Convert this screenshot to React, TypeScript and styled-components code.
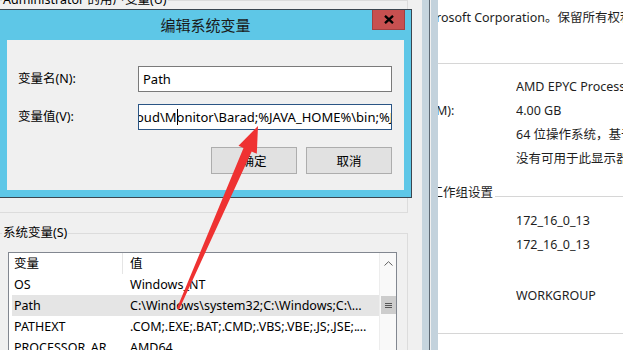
import React from "react";
import styled, { createGlobalStyle } from "styled-components";

const GlobalStyle = createGlobalStyle`
  html, body {
    margin: 0;
    padding: 0;
  }
  body {
    width: 623px;
    height: 350px;
    overflow: hidden;
    background: #f0f0f0;
    font-family: "Noto Sans", "Noto Sans CJK SC", sans-serif;
    font-size: 12.5px;
    color: #000;
  }
`;

const Desktop = styled.div`
  position: relative;
  width: 623px;
  height: 350px;
  overflow: hidden;
  background: #f0f0f0;
`;

/* ---------- 系统 (control panel) window, furthest back ---------- */

const SystemWindow = styled.div`
  position: absolute;
  left: 300px;
  top: 0;
  width: 420px;
  height: 350px;
  box-sizing: border-box;
  padding: 6px 0 0 43px;
  background: #fff;
  color: #1e1e1e;
  white-space: nowrap;
`;

const Copyright = styled.div`
  padding-left: 27px;
  line-height: 24px;
`;

const Rule = styled.div<{ $top: number }>`
  height: 1px;
  margin-top: ${(p) => p.$top}px;
  background: #d6d6d6;
`;

const InfoGrid = styled.div<{ $top: number }>`
  display: grid;
  grid-template-columns: 162px 1fr;
  padding-left: 11px;
  margin-top: ${(p) => p.$top}px;
`;

const InfoCell = styled.div<{ $tall?: boolean }>`
  line-height: ${(p) => (p.$tall ? 27 : 24)}px;
  overflow: hidden;
`;

const SectionHead = styled.div`
  display: flex;
  align-items: center;
  margin-top: 10px;
  line-height: 24px;
`;

const SectionLine = styled.div`
  flex: 1;
  height: 1px;
  margin: 6px 0 0 2px;
  background: #d6d6d6;
`;

/* ---------- 系统属性 dialog, only its frame shows ---------- */

const PropsDialog = styled.div`
  position: absolute;
  left: 200px;
  top: 0;
  width: 238px;
  height: 350px;
  box-sizing: border-box;
  background: #f0f0f0;
  border-right: 7px solid #c3d2dc;
`;

/* ---------- 环境变量 dialog ---------- */

const EnvDialog = styled.div`
  position: absolute;
  left: -16px;
  top: 0;
  width: 446px;
  height: 360px;
  box-sizing: border-box;
  padding-left: 10px;
  background: #f0f0f0;
  border-right: 1px solid #5d6973;
  box-shadow: inset -7px 0 0 #c6d5de;
`;

const Group = styled.fieldset<{ $height?: number; $top: number }>`
  display: block;
  width: 414px;
  box-sizing: border-box;
  margin: ${(p) => p.$top}px 0 0 0;
  padding: 11px 10px 0 13px;
  border: 1px solid #dcdcdc;
  ${(p) => (p.$height ? `height: ${p.$height}px;` : "")}
`;

const GroupLegend = styled.legend`
  margin-left: -6px;
  padding: 0 1px;
  line-height: 16px;
  white-space: nowrap;
`;

const ListView = styled.div`
  display: flex;
  height: 130px;
  border: 1px solid #828790;
  background: #fff;
`;

const ListMain = styled.div`
  flex: 1;
  min-width: 0;
`;

const ListHeader = styled.div`
  display: grid;
  grid-template-columns: 114px 1fr;
  height: 21px;
`;

const HeaderCell = styled.div<{ $first?: boolean }>`
  padding-left: ${(p) => (p.$first ? 5 : 7)}px;
  line-height: 21px;
  border-right: ${(p) => (p.$first ? "1px solid #e5e5e5" : "none")};
`;

const ListBody = styled.div`
  padding-left: 3px;
`;

const ListRow = styled.div<{ $selected?: boolean }>`
  display: grid;
  grid-template-columns: 111px 1fr;
  height: 21px;
  line-height: 21px;
  background: ${(p) => (p.$selected ? "#e5e5e5" : "transparent")};
`;

const Cell = styled.div<{ $first?: boolean }>`
  padding: 0 ${(p) => (p.$first ? 3 : 7)}px 0 ${(p) => (p.$first ? 2 : 7)}px;
  overflow: hidden;
  white-space: nowrap;
  text-overflow: ellipsis;
`;

const ScrollBar = styled.div`
  width: 17px;
  display: flex;
  flex-direction: column;
  align-items: center;
  background: #f9f9f9;
  border-left: 1px solid #ededed;
  box-sizing: border-box;
`;

const ScrollArrow = styled.div`
  height: 21px;
  display: flex;
  align-items: center;
  justify-content: center;
`;

const ScrollThumb = styled.div<{ $offset: number }>`
  width: 15px;
  height: 18px;
  margin-top: ${(p) => p.$offset}px;
  display: flex;
  align-items: center;
  justify-content: center;
  background: #cdcdcd;
`;

/* ---------- 编辑系统变量 dialog ---------- */

const EditDialog = styled.div`
  position: absolute;
  left: -1px;
  top: 9px;
  width: 413px;
  box-sizing: border-box;
  padding: 0 7px 7px;
  background: #5ec7e7;
  border: 1px solid #3b4650;
`;

const TitleBar = styled.div`
  display: grid;
  grid-template-columns: 1fr auto 1fr;
  height: 30px;
`;

const Title = styled.div`
  grid-column: 2;
  font-size: 15px;
  line-height: 30px;
  color: #1a1a1a;
`;

const CloseButton = styled.div`
  grid-column: 3;
  justify-self: end;
  width: 33px;
  height: 20px;
  margin-right: -1px;
  display: flex;
  align-items: center;
  justify-content: center;
  box-sizing: border-box;
  background: #c75050;
  border: 1px solid #a24040;
  border-top: none;
`;

const Client = styled.div`
  height: 150px;
  box-sizing: border-box;
  padding: 26px 12px 0 11px;
  background: #f0f0f0;
`;

const FormGrid = styled.div`
  display: grid;
  grid-template-columns: 120px 1fr;
  row-gap: 12px;
  align-items: center;
`;

const FieldLabel = styled.div`
  line-height: 26px;
`;

const TextBox = styled.div<{ $focused?: boolean }>`
  height: 26px;
  box-sizing: border-box;
  padding-left: ${(p) => (p.$focused ? 0 : 4)}px;
  border: 1px solid ${(p) => (p.$focused ? "#2a5585" : "#7a7a7a")};
  background: #fff;
  font-size: 13px;
  line-height: 24px;
  white-space: nowrap;
  overflow: hidden;
`;

const ScrolledText = styled.span<{ $shift: number }>`
  display: inline-block;
  margin-left: ${(p) => -p.$shift}px;
`;

const Caret = styled.span`
  display: inline-block;
  width: 1px;
  height: 16px;
  margin-right: -1px;
  vertical-align: -3px;
  background: #000;
`;

const ButtonRow = styled.div`
  display: flex;
  justify-content: flex-end;
  gap: 9px;
  margin-top: 17px;
`;

const DialogButton = styled.div`
  width: 86px;
  height: 27px;
  box-sizing: border-box;
  display: flex;
  align-items: center;
  justify-content: center;
  background: #e1e1e1;
  border: 1px solid #adadad;
`;

const ArrowLayer = styled.svg`
  position: absolute;
  left: 0;
  top: 0;
  pointer-events: none;
`;

const infoTop = [
  ["处理器:", "AMD EPYC Processor"],
  ["安装的内存(RAM):", "4.00 GB"],
  ["系统类型:", "64 位操作系统，基于 x64 的处理器"],
  ["笔和触摸:", "没有可用于此显示器的笔或触控输入"],
];

const infoBottom = [
  ["计算机名:", "172_16_0_13", false],
  ["计算机全名:", "172_16_0_13", false],
  ["计算机描述:", "", true],
  ["工作组:", "WORKGROUP", false],
] as const;

const sysVars = [
  ["OS", "Windows_NT"],
  ["Path", "C:\\Windows\\system32;C:\\Windows;C:\\Windows\\System32\\Wbem;C:\\Windows\\System32\\WindowsPowerShell\\v1.0\\"],
  ["PATHEXT", ".COM;.EXE;.BAT;.CMD;.VBS;.VBE;.JS;.JSE;.WSF;.WSH;.MSC"],
  ["PROCESSOR_ARCHITECTURE", "AMD64"],
  ["PROCESSOR_IDENTIFIER", "AMD64 Family 23 Model 49 Stepping 0, AuthenticAMD"],
];

export default function App() {
  return (
    <>
      <GlobalStyle />
      <Desktop>
        <SystemWindow>
          <Copyright>© 2012 Microsoft Corporation。保留所有权利。</Copyright>
          <Rule $top={33} />
          <InfoGrid $top={11}>
            {infoTop.map(([k, v]) => (
              <React.Fragment key={k}>
                <InfoCell>{k}</InfoCell>
                <InfoCell>{v}</InfoCell>
              </React.Fragment>
            ))}
          </InfoGrid>
          <SectionHead>
            计算机名、域和工作组设置
            <SectionLine />
          </SectionHead>
          <InfoGrid $top={4}>
            {infoBottom.map(([k, v, tall]) => (
              <React.Fragment key={k}>
                <InfoCell $tall={tall}>{k}</InfoCell>
                <InfoCell $tall={tall}>{v}</InfoCell>
              </React.Fragment>
            ))}
          </InfoGrid>
          <Rule $top={25} />
        </SystemWindow>

        <PropsDialog />

        <EnvDialog>
          <Group $top={-8} $height={221}>
            <GroupLegend>Administrator 的用户变量(U)</GroupLegend>
          </Group>
          <Group $top={12}>
            <GroupLegend>系统变量(S)</GroupLegend>
            <ListView>
              <ListMain>
                <ListHeader>
                  <HeaderCell $first>变量</HeaderCell>
                  <HeaderCell>值</HeaderCell>
                </ListHeader>
                <ListBody>
                  {sysVars.map(([name, value]) => (
                    <ListRow key={name} $selected={name === "Path"}>
                      <Cell $first>{name}</Cell>
                      <Cell>{value}</Cell>
                    </ListRow>
                  ))}
                </ListBody>
              </ListMain>
              <ScrollBar>
                <ScrollArrow>
                  <svg width="9" height="5" viewBox="0 0 9 5">
                    <path d="M0.5 4.5 L4.5 0.7 L8.5 4.5" fill="none" stroke="#606060" strokeWidth="1" />
                  </svg>
                </ScrollArrow>
                <ScrollThumb $offset={22}>
                  <svg width="7" height="7" viewBox="0 0 7 7">
                    <path d="M0 1.5 H7 M0 3.5 H7 M0 5.5 H7" stroke="#555" strokeWidth="1" />
                  </svg>
                </ScrollThumb>
              </ScrollBar>
            </ListView>
          </Group>
        </EnvDialog>

        <EditDialog>
          <TitleBar>
            <Title>编辑系统变量</Title>
            <CloseButton>
              <svg width="10" height="9" viewBox="0 0 10 9">
                <path d="M1 0.8 L9 8.2 M9 0.8 L1 8.2" stroke="#000" strokeWidth="2.3" />
              </svg>
            </CloseButton>
          </TitleBar>
          <Client>
            <FormGrid>
              <FieldLabel>变量名(N):</FieldLabel>
              <TextBox>Path</TextBox>
              <FieldLabel>变量值(V):</FieldLabel>
              <TextBox $focused>
                <ScrolledText $shift={3}>
                  oud\M
                  <Caret />
                  onitor\Barad;%JAVA_HOME%\bin;%JAVA_HOME%\jre\bin;
                </ScrolledText>
              </TextBox>
            </FormGrid>
            <ButtonRow>
              <DialogButton>确定</DialogButton>
              <DialogButton>取消</DialogButton>
            </ButtonRow>
          </Client>
        </EditDialog>

        <ArrowLayer width="623" height="350" viewBox="0 0 623 350">
          <polygon
            points="258,126 256.8,153.8 251.7,151.6 179.1,309.5 176.9,308.5 243.5,148 238.5,145.8"
            fill="#ef3232"
          />
        </ArrowLayer>
      </Desktop>
    </>
  );
}
